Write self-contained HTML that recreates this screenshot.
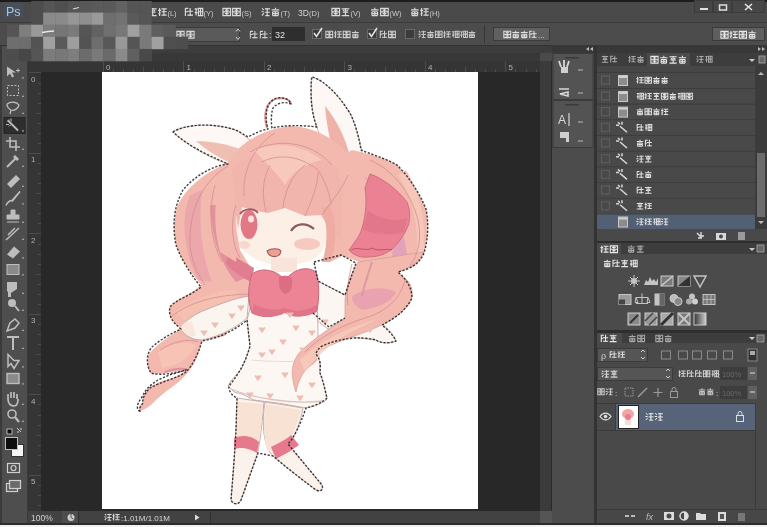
<!DOCTYPE html>
<html><head><meta charset="utf-8">
<style>
*{margin:0;padding:0;box-sizing:border-box}
html,body{width:767px;height:527px;overflow:hidden;background:#4a4a4a;font-family:"Liberation Sans",sans-serif}
.a{position:absolute}
svg text{font-family:"Liberation Sans",sans-serif}
</style></head><body>
<div class="a" style="left:0;top:0;width:767px;height:22px;background:#4a4a4a"></div>
<div class="a" style="left:0;top:22px;width:767px;height:24px;background:#4c4c4c"></div>
<div class="a" style="left:0;top:46px;width:28px;height:477px;background:#4e4e4e;border-left:2px solid #3a3a3a;border-right:1px solid #3a3a3a"></div>
<div class="a" style="left:28px;top:61px;width:512px;height:11px;background:#353535"></div>
<div class="a" style="left:28px;top:72px;width:13px;height:439px;background:#353535"></div>
<div class="a" style="left:41px;top:72px;width:499px;height:439px;background:#282828"></div>
<div class="a" style="left:102px;top:72px;width:376px;height:437px;background:#fff"></div>
<div class="a" style="left:28px;top:511px;width:523px;height:12px;background:#424242"></div>
<div class="a" style="left:540px;top:61px;width:12px;height:450px;background:#3b3b3b;border-right:1px solid #2a2a2a"></div>
<div class="a" style="left:540px;top:511px;width:12px;height:12px;background:#555"></div>
<div class="a" style="left:552px;top:45px;width:42px;height:478px;background:#4c4c4c"></div>
<div class="a" style="left:594px;top:45px;width:3px;height:478px;background:#333"></div>
<div class="a" style="left:597px;top:45px;width:170px;height:478px;background:#4a4a4a"></div>
<div class="a" style="left:0;top:523px;width:767px;height:2px;background:#2c2c2c"></div><div class="a" style="left:0;top:525px;width:767px;height:2px;background:#f2f2f2"></div>
<svg class="a" style="left:0;top:0" width="767" height="527" viewBox="0 0 767 527">
<defs>
<filter id="bl" x="-10%" y="-10%" width="120%" height="120%"><feGaussianBlur stdDeviation="0.7"/></filter>
<filter id="bl2" x="-10%" y="-10%" width="120%" height="120%"><feGaussianBlur stdDeviation="1.6"/></filter>
</defs>
<g filter="url(#bl)" stroke-linejoin="round">
<!-- left ear -->
<path d="M173,132 C185,124 215,122 238,131 L250,140 L228,164 C215,160 190,148 173,132 Z" fill="#fdf8f5" stroke="#c7aaa6" stroke-width="0.9"/>
<path d="M196,141 C215,141 235,146 246,152 L230,163 C218,157 206,150 196,141 Z" fill="#f0bfb4"/>
<!-- right ear -->
<path d="M312,77 C324,80 340,96 351,115 C356,126 360,140 362,152 L335,170 L323,142 C318,132 314,122 312,106 C311,95 311,85 312,77 Z" fill="#fdf8f5" stroke="#c7aaa6" stroke-width="0.9"/>
<path d="M325,106 C335,118 345,135 351,160 L338,168 C332,150 327,130 325,106 Z" fill="#efb2a8"/>
<!-- ahoge -->
<path d="M267,128 C263,114 266,101 277,98.5 C285,97.5 290,100 291,104" fill="none" stroke="#e49a9a" stroke-width="2.2"/>
<!-- right lobe -->
<path d="M352,150 C370,154 385,158 397,165 C409,177 419,192 426,209 C429,224 428,240 424,253 C420,262 416,266 410,268 L398,272 L360,262 L342,256 L330,245 L328,200 L335,160 Z" fill="#f3b9af"/>
<path d="M388,205 C402,225 410,250 406,268 L390,272 C394,255 394,236 384,215 Z" fill="#e3a2ba"/>
<path d="M406,170 C418,190 426,215 424,250 L416,262 C420,230 414,200 398,175 Z" fill="#f6c6b8"/>
<!-- ribbon -->
<path d="M370,174 C382,178 396,188 407,202 C411,212 410,220 408,226 C405,234 398,244 392,249 C386,254 378,257 368,257 C362,258 354,256 349,250 C354,243 360,236 362,228 C366,215 367,200 365,188 Z" fill="#eb8193" stroke="#c96c7c" stroke-width="0.9"/>
<path d="M368,210 C381,220 396,222 407,218 L404,232 C391,236 376,234 363,230 Z" fill="#dc6f86" opacity="0.6"/>
<path d="M351,250 C358,246 366,252 372,248 C378,252 386,248 392,250" fill="none" stroke="#c85068" stroke-width="1"/>
<!-- left lobe -->
<path d="M228,163 C205,172 186,188 178,205 C172,222 173,240 180,255 C186,268 196,277 201,285 C192,294 178,298 170,306 C167,314 172,322 180,328 L202,341 L225,336 L250,300 L252,270 L240,250 L232,200 Z" fill="#f3b9af"/>
<path d="M190,195 C180,220 184,252 198,280 L212,282 C202,255 198,225 202,190 Z" fill="#eca7aa"/>
<path d="M210,205 C212,240 220,262 236,282 L250,276 C234,258 226,236 222,205 Z" fill="#e3929d"/>
<path d="M228,252 C236,258 244,262 254,268 L252,282 C242,278 234,272 226,264 Z" fill="#e07e90"/>
<path d="M176,312 C190,300 210,292 235,290 L240,300 C220,302 200,310 186,322 Z" fill="#f6c2b2" opacity="0.8"/>
<!-- left tail -->
<path d="M182,328 C170,336 157,344 149,354 C146,362 147,370 151,373 C156,375 165,373 172,372 L186,370 C180,376 170,379 162,381 C154,384 148,388 146,392 C143,396 142,399 143,402 C140,405 137,408 140,411 C144,410 148,407 151,405 C156,400 163,393 175,385 C188,375 198,362 202,341 Z" fill="#f3b9af"/>
<path d="M158,352 C170,344 185,340 196,345 C190,358 178,366 162,368 Z" fill="#f7c5b6" opacity="0.8"/>
<path d="M165,372 C175,368 186,368 188,370" fill="none" stroke="#e0909a" stroke-width="2"/>
<!-- head hair -->
<path d="M228,163 C236,145 262,129 290,126 C316,127 340,140 356,165 C366,195 352,235 342,256 L330,262 L322,215 C300,202 262,202 240,215 L236,262 L220,252 C212,222 214,185 228,163 Z" fill="#f3b9af"/>
<!-- face -->
<path d="M236,205 L328,205 L328,233 C326,248 321,255 312,260 C303,264 295,265 280,265 C265,265 252,258 245,252 C239,246 236,235 236,222 Z" fill="#fcefe6"/>
<!-- bangs -->
<path d="M232,170 C255,145 305,140 337,168 C344,190 343,215 342,240 L330,230 L321,215 L305,216 L285,208 L268,213 L252,210 L242,207 L238,228 L236,215 Z" fill="#f2b5ad"/>
<path d="M254,150 C275,142 300,143 322,160 C310,163 295,168 285,185 C275,170 262,160 254,150 Z" fill="#f7c8bc"/>
<path d="M330,205 C337,225 337,245 330,262 L322,262 C328,245 328,225 322,208 Z" fill="#efaca2"/>
<!-- eye & face details -->
<ellipse cx="249" cy="224.5" rx="8.5" ry="14.5" fill="#e27886"/>
<path d="M240,214 C244,208 254,208 258,213" stroke="#a05a66" stroke-width="2" fill="none"/>
<ellipse cx="251" cy="219" rx="3" ry="3.5" fill="#fbe3e3"/>
<path d="M291,231 C296,223 306,222 314,229" stroke="#8a5a5e" stroke-width="2.3" fill="none"/>
<ellipse cx="307" cy="244" rx="13" ry="6" fill="#f5c0b6" opacity="0.8"/>
<ellipse cx="244" cy="245" rx="6" ry="4" fill="#f6c6bc" opacity="0.6"/>
<path d="M267,251 C271,248 279,248 281,251 C280,258 270,259 267,251 Z" fill="#eea092" stroke="#9a5a60" stroke-width="1.1"/>
<!-- neck -->
<path d="M271,258 L297,258 L297,272 L271,272 Z" fill="#f8e4da"/>
<!-- right arm (hand) -->
<path d="M318,281 L345,295 L380,322 C388,328 394,336 396,341 C388,344 380,343 376,340 L345,336 C330,332 320,324 316,318 Z" fill="#fbf6f2" stroke="#b89c9a" stroke-width="0.8"/>
<!-- left arm -->
<path d="M249,296 L247,318 C238,326 222,336 202,340 C192,340 185,336 180,328 C186,320 195,314 205,310 C220,304 235,298 249,296 Z" fill="#fbf5f0" stroke="#b89c9a" stroke-width="0.8"/>
<path d="M180,328 C183,322 188,320 192,322 L196,336 C190,338 184,334 180,328 Z" fill="#f9e6dc"/>
<!-- dress -->
<path d="M252,300 L316,300 C320,330 316,345 320,362 C320,368 320,373 320,373 C323,380 325,390 327,398 C326,402 323,402 323,402 C318,406 306,408 306,408 C295,406 278,403 278,403 C268,402 254,400 254,400 L242,394 L234,392 L228,386 L231,381 C236,375 242,368 242,368 C246,358 250,346 250,346 L247,320 Z" fill="#fcf7f2" stroke="#b89c9a" stroke-width="0.8"/>
<path d="M231,389 C250,397 290,405 323,401" stroke="#dcc4bd" stroke-width="1.3" fill="none"/>
<path d="M252,360 C270,362 300,362 320,360" stroke="#eadad4" stroke-width="1" fill="none"/>
<!-- right strand -->
<path d="M358,262 C350,275 346,288 345,300 L345,318 C330,328 312,340 300,352 C293,360 291,370 293,380 C294,386 295,390 296,392 C298,382 302,372 310,366 C316,362 318,360 316,354 C322,348 335,343 360,334 C380,327 397,318 408,306 C414,296 413,288 408,281 C404,277 400,275 398,272 C410,268 418,262 424,252 Z" fill="#f3b9af" stroke="#cf9c96" stroke-width="0.7"/>
<path d="M352,296 C362,290 378,284 396,292 C392,302 378,308 362,310 C355,306 352,302 352,296 Z" fill="#e69cb0" opacity="0.8"/>
<path d="M300,360 C315,345 340,330 380,318 C350,332 325,344 305,372 Z" fill="#f8ccbd" opacity="0.8"/>
<path d="M372,262 C368,275 364,285 362,296" fill="none" stroke="#dc9aa0" stroke-width="2"/>
<!-- bow -->
<path d="M252,274 C263,266 277,271 285,280 C293,270 306,265 316,272 C320,285 319,300 317,310 C305,318 292,317 285,311 C275,318 262,318 252,313 C247,300 248,286 252,274 Z" fill="#ec8496" stroke="#c46878" stroke-width="1"/>
<path d="M279,277 C284,275 290,275 292,279 C293,289 289,294 285,294 C280,292 278,285 279,277 Z" fill="#dc6d83"/>
<path d="M254,304 C265,310 275,311 285,308 C295,312 305,312 318,304 L317,312 C305,318 292,318 285,313 C275,318 262,318 252,313 Z" fill="#df7489"/>
<!-- legs -->
<path d="M237,398 L264,402 C262,420 261,440 257,455 L241,500 C239,505 233,505 231,500 C233,475 235,450 236,430 Z" fill="#fbf2ec" stroke="#b89c9a" stroke-width="0.8"/>
<path d="M265,402 L303,408 C300,425 294,438 288,444 L322,485 C324,490 320,492 316,490 C300,478 287,468 273,456 C262,445 262,420 265,402 Z" fill="#fbf2ec" stroke="#b89c9a" stroke-width="0.8"/>
<path d="M238,402 L263,404 C262,420 261,432 259,442 L236,442 Z" fill="#f8e2d3"/>
<path d="M266,404 L301,410 C298,422 294,432 290,440 L268,452 C263,440 263,420 266,404 Z" fill="#f8e2d3"/>
<path d="M234,438 C243,434 253,436 259,442 L257,453 C249,448 241,447 234,449 Z" fill="#e47a8c"/>
<path d="M271,447 C279,443 287,439 291,435 L299,445 C292,450 284,455 276,459 Z" fill="#e47a8c"/>
<!-- hearts -->
<g><path d="M259,327.5 L262,332 L265,327.5 M260.8,327.5L262,329.5L263.2,327.5" stroke="#edbdb4" stroke-width="1.4" fill="none"/><path d="M293,325.5 L296,330 L299,325.5 M294.8,325.5L296,327.5L297.2,325.5" stroke="#edbdb4" stroke-width="1.4" fill="none"/><path d="M269,349.5 L272,354 L275,349.5 M270.8,349.5L272,351.5L273.2,349.5" stroke="#edbdb4" stroke-width="1.4" fill="none"/><path d="M300,347.5 L303,352 L306,347.5 M301.8,347.5L303,349.5L304.2,347.5" stroke="#edbdb4" stroke-width="1.4" fill="none"/><path d="M255,375.5 L258,380 L261,375.5 M256.8,375.5L258,377.5L259.2,375.5" stroke="#edbdb4" stroke-width="1.4" fill="none"/><path d="M282,372.5 L285,377 L288,372.5 M283.8,372.5L285,374.5L286.2,372.5" stroke="#edbdb4" stroke-width="1.4" fill="none"/><path d="M309,382.5 L312,387 L315,382.5 M310.8,382.5L312,384.5L313.2,382.5" stroke="#edbdb4" stroke-width="1.4" fill="none"/><path d="M267,393.5 L270,398 L273,393.5 M268.8,393.5L270,395.5L271.2,393.5" stroke="#edbdb4" stroke-width="1.4" fill="none"/><path d="M297,395.5 L300,400 L303,395.5 M298.8,395.5L300,397.5L301.2,395.5" stroke="#edbdb4" stroke-width="1.4" fill="none"/><path d="M259,352.5 L262,357 L265,352.5 M260.8,352.5L262,354.5L263.2,352.5" stroke="#edbdb4" stroke-width="1.4" fill="none"/><path d="M287,312.5 L290,317 L293,312.5 M288.8,312.5L290,314.5L291.2,312.5" stroke="#edbdb4" stroke-width="1.4" fill="none"/><path d="M309,330.5 L312,335 L315,330.5 M310.8,330.5L312,332.5L313.2,330.5" stroke="#edbdb4" stroke-width="1.4" fill="none"/><path d="M247,392.5 L250,397 L253,392.5 M248.8,392.5L250,394.5L251.2,392.5" stroke="#edbdb4" stroke-width="1.4" fill="none"/><path d="M280,339.5 L283,344 L286,339.5 M281.8,339.5L283,341.5L284.2,339.5" stroke="#edbdb4" stroke-width="1.4" fill="none"/><path d="M212,322.5 L215,327 L218,322.5 M213.8,322.5L215,324.5L216.2,322.5" stroke="#edbdb4" stroke-width="1.4" fill="none"/><path d="M229,313.5 L232,318 L235,313.5 M230.8,313.5L232,315.5L233.2,313.5" stroke="#edbdb4" stroke-width="1.4" fill="none"/><path d="M201,330.5 L204,335 L207,330.5 M202.8,330.5L204,332.5L205.2,330.5" stroke="#edbdb4" stroke-width="1.4" fill="none"/><path d="M238,305.5 L241,310 L244,305.5 M239.8,305.5L241,307.5L242.2,305.5" stroke="#edbdb4" stroke-width="1.4" fill="none"/><path d="M322,319.5 L325,324 L328,319.5 M323.8,319.5L325,321.5L326.2,319.5" stroke="#edbdb4" stroke-width="1.4" fill="none"/><path d="M367,327.5 L370,332 L373,327.5 M368.8,327.5L370,329.5L371.2,327.5" stroke="#edbdb4" stroke-width="1.4" fill="none"/></g>
<!-- hair strand lines -->
<g fill="none" stroke="#cf8c90" stroke-width="1" opacity="0.75">
<path d="M244,196 C242,170 255,145 275,133"/>
<path d="M250,152 C275,138 310,140 332,165"/>
<path d="M262,162 C280,153 300,156 318,170 C325,180 330,195 331,205"/>
<path d="M283,208 C285,190 292,175 305,165"/>
<path d="M266,212 C262,195 262,180 270,165"/>
<path d="M305,216 C312,200 318,185 318,172"/>
<path d="M322,215 C332,200 342,190 348,175"/>
<path d="M370,160 C392,170 410,190 418,220 C422,240 418,255 410,265"/>
<path d="M365,178 C380,186 395,200 404,215"/>
<path d="M228,166 C205,180 190,205 190,240 C190,260 198,275 205,285"/>
<path d="M215,185 C208,210 210,240 222,262"/>
<path d="M236,205 C230,222 232,245 240,258"/>
<path d="M172,316 C190,302 215,295 248,294"/>
<path d="M160,350 C172,342 188,338 198,342"/>
<path d="M352,264 C348,280 346,295 348,305"/>
<path d="M405,280 C400,300 385,312 365,318 C340,326 318,338 305,352"/>
</g>
<!-- selection outline -->
<g fill="none" stroke="#1c1c1c" stroke-width="1.4" stroke-dasharray="2.2 1.6" opacity="0.85">
<path d="M173,132 C185,124 215,122 238,131 L248,137 C255,133 262,130 268,129 C264,116 266,101 277,98 C285,97 290,100 291,104 C284,101 277,103 273,108 C271,114 271,122 272,128 C285,125 300,125 317,127 C313,118 311,105 311,92 C311,85 311,80 312,77 C324,80 340,96 351,115 C356,126 359,138 361,150 C370,154 385,158 397,165 C409,177 419,192 426,209 C429,224 428,240 424,253 C420,262 414,268 398,272 C404,277 412,286 412,298 C405,312 392,320 382,325 C388,330 394,336 396,341 C388,344 380,343 376,340 C360,336 340,338 322,346 C318,349 316,352 316,354 C322,362 320,368 320,373 C323,380 325,390 327,398 C322,404 306,408 306,408 C300,425 294,438 288,444 L322,485 C324,490 320,492 316,490 C300,478 287,468 273,456 L258,453 L241,500 C239,505 233,505 231,500 C233,475 235,450 236,430 L237,398 C232,396 228,390 229,386 C238,375 246,362 250,346 L247,320 C235,330 220,338 202,341 C198,355 192,366 186,372 C178,378 160,382 150,388 C144,394 142,400 143,403 C140,407 138,410 141,412 C136,410 136,405 142,397 C146,388 152,384 158,380 C170,374 180,372 186,370 C175,373 160,376 151,373 C146,365 146,354 152,347 C160,340 170,334 181,329 C172,322 168,315 170,307 C175,300 190,296 201,287 C195,280 182,262 176,245 C172,225 174,206 183,190 C193,178 210,166 228,164 C215,158 190,148 173,132 Z"/>
<path d="M314,262 L341,255 L356,263 L345,295 L318,281 Z"/>
<path d="M313,313 L329,327 L345,318"/>
</g>
</svg>

<svg class="a" style="left:0;top:0" width="767" height="527" viewBox="0 0 767 527">
<defs><filter id="sb" x="0" y="0" width="100%" height="100%"><feGaussianBlur stdDeviation="0.45"/></filter></defs><g filter="url(#sb)"><rect x="0" y="0" width="767" height="2" fill="#1c1a1a" />
<rect x="4" y="3" width="19" height="15" fill="#46505a" rx="2"/>
<text x="6" y="15.5" font-size="12.5" fill="#a4c6e6" font-weight="normal" text-anchor="start" >Ps</text>
<path transform="translate(148.0,7) scale(0.950)" d="M1,2H9 M5,1V9.5 M2,5.5H8 M1,9H9 M2.5,3.5L4,4.5 M7.5,3.5L6,4.5" fill="none" stroke="#dadada" stroke-width="1.25"/><path transform="translate(157.7,7) scale(0.950)" d="M2,1V9.5 M0.5,3.5H3.5 M4,2H9.5 M4,5H9.5 M4,8.5H9.5 M6.5,2V8.5 M0.8,7.5L3,6" fill="none" stroke="#dadada" stroke-width="1.25"/>
<text x="167.4" y="16" font-size="7.5" fill="#cccccc" font-weight="normal" text-anchor="start" >(L)</text>
<path transform="translate(184.0,7) scale(0.950)" d="M1.5,1V9.5 M1.5,1.5H4.5 M3.5,4.5H9.5 M6.5,1V9.5 M3.5,8.5H9.5 M1.5,5H4" fill="none" stroke="#dadada" stroke-width="1.25"/><path transform="translate(193.7,7) scale(0.950)" d="M1,2H4 M2.5,2V9 M1,6H4 M5,1.5H9.5V9H5Z M5,5H9.5 M7.2,1.5V9" fill="none" stroke="#dadada" stroke-width="1.25"/>
<text x="203.4" y="16" font-size="7.5" fill="#cccccc" font-weight="normal" text-anchor="start" >(Y)</text>
<path transform="translate(222.0,7) scale(0.950)" d="M1,1.5H9V9H1Z M1,5.2H9 M5,1.5V9 M3,3.3H7 M3,7H7" fill="none" stroke="#dadada" stroke-width="1.25"/><path transform="translate(231.7,7) scale(0.950)" d="M1,1.5H9V9H1Z M1,5.2H9 M5,1.5V9 M3,3.3H7 M3,7H7" fill="none" stroke="#dadada" stroke-width="1.25"/>
<text x="241.4" y="16" font-size="7.5" fill="#cccccc" font-weight="normal" text-anchor="start" >(S)</text>
<path transform="translate(261.0,7) scale(0.950)" d="M1,1.5L3,3 M0.5,5H3 M1,9L3,6.5 M4,2H9.5 M6.5,1V9.5 M4,5.5H9.5 M4.5,9H9" fill="none" stroke="#dadada" stroke-width="1.25"/><path transform="translate(270.7,7) scale(0.950)" d="M5,0.8V3 M1,3H9 M2,5H8 M2,5V9 M8,5V9 M2,9H8 M5,5V9 M2,7H8" fill="none" stroke="#dadada" stroke-width="1.25"/>
<text x="280.4" y="16" font-size="7.5" fill="#cccccc" font-weight="normal" text-anchor="start" >(T)</text>
<text x="298" y="16" font-size="8.5" fill="#d4d4d4" font-weight="normal" text-anchor="start" >3D</text>
<text x="309" y="16" font-size="7.5" fill="#cccccc" font-weight="normal" text-anchor="start" >(D)</text>
<path transform="translate(331.0,7) scale(0.950)" d="M1,1.5H9V9H1Z M1,5.2H9 M5,1.5V9 M3,3.3H7 M3,7H7" fill="none" stroke="#dadada" stroke-width="1.25"/><path transform="translate(340.7,7) scale(0.950)" d="M1,2H9 M5,1V9.5 M2,5.5H8 M1,9H9 M2.5,3.5L4,4.5 M7.5,3.5L6,4.5" fill="none" stroke="#dadada" stroke-width="1.25"/>
<text x="350.4" y="16" font-size="7.5" fill="#cccccc" font-weight="normal" text-anchor="start" >(V)</text>
<path transform="translate(370.0,7) scale(0.950)" d="M5,0.8V3 M1,3H9 M2,5H8 M2,5V9 M8,5V9 M2,9H8 M5,5V9 M2,7H8" fill="none" stroke="#dadada" stroke-width="1.25"/><path transform="translate(379.7,7) scale(0.950)" d="M1,1.5H9V9H1Z M1,5.2H9 M5,1.5V9 M3,3.3H7 M3,7H7" fill="none" stroke="#dadada" stroke-width="1.25"/>
<text x="389.4" y="16" font-size="7.5" fill="#cccccc" font-weight="normal" text-anchor="start" >(W)</text>
<path transform="translate(410.0,7) scale(0.950)" d="M5,0.8V3 M1,3H9 M2,5H8 M2,5V9 M8,5V9 M2,9H8 M5,5V9 M2,7H8" fill="none" stroke="#dadada" stroke-width="1.25"/><path transform="translate(419.7,7) scale(0.950)" d="M2,1V9.5 M0.5,3.5H3.5 M4,2H9.5 M4,5H9.5 M4,8.5H9.5 M6.5,2V8.5 M0.8,7.5L3,6" fill="none" stroke="#dadada" stroke-width="1.25"/>
<text x="429.4" y="16" font-size="7.5" fill="#cccccc" font-weight="normal" text-anchor="start" >(H)</text>
<rect x="694" y="0" width="71" height="13" fill="#474747" />
<rect x="694.5" y="0.5" width="18" height="12" fill="none" stroke="#3a3a3a" stroke-width="1"/>
<rect x="713.5" y="0.5" width="18" height="12" fill="none" stroke="#3a3a3a" stroke-width="1"/>
<rect x="732.5" y="0.5" width="32" height="12" fill="none" stroke="#3a3a3a" stroke-width="1"/>
<rect x="700" y="8" width="8" height="2" fill="#dedede" />
<rect x="719.5" y="5" width="7" height="5" fill="none" stroke="#dedede" stroke-width="1.5"/>
<path d="M745,4L752,10M752,4L745,10" fill="none" stroke="#e4e4e4" stroke-width="1.6" />
<line x1="0" y1="22.5" x2="767" y2="22.5" stroke="#3a3a3a" stroke-width="1" />
<rect x="146.5" y="27.5" width="93" height="14" fill="#5a5a5a" stroke="#3a3a3a" stroke-width="1"/>
<path transform="translate(176.0,30) scale(0.900)" d="M1,1.5H9V9H1Z M1,5.2H9 M5,1.5V9 M3,3.3H7 M3,7H7" fill="none" stroke="#d8d8d8" stroke-width="1.17"/><path transform="translate(186.0,30) scale(0.900)" d="M1,1.5H9V9H1Z M1,5.2H9 M5,1.5V9 M3,3.3H7 M3,7H7" fill="none" stroke="#d8d8d8" stroke-width="1.17"/>
<path d="M236,31.5l2,-2.5l2,2.5M236,37l2,2.5l2,-2.5" fill="none" stroke="#cfcfcf" stroke-width="1" />
<path transform="translate(249.0,30) scale(0.900)" d="M1.5,1V9.5 M1.5,1.5H4.5 M3.5,4.5H9.5 M6.5,1V9.5 M3.5,8.5H9.5 M1.5,5H4" fill="none" stroke="#cfcfcf" stroke-width="1.17"/><path transform="translate(259.0,30) scale(0.900)" d="M1.5,1V9.5 M1.5,1.5H4.5 M3.5,4.5H9.5 M6.5,1V9.5 M3.5,8.5H9.5 M1.5,5H4" fill="none" stroke="#cfcfcf" stroke-width="1.17"/>
<text x="269" y="38" font-size="9" fill="#cfcfcf" font-weight="normal" text-anchor="start" >:</text>
<rect x="272" y="27" width="33" height="14" fill="#2f2f2f" />
<text x="275" y="38" font-size="9" fill="#e0e0e0" font-weight="normal" text-anchor="start" >32</text>
<rect x="312.5" y="29.5" width="9" height="9" fill="#3a3a3a" stroke="#6a6a6a" stroke-width="1"/>
<path d="M314,33L316.5,36.5L322,28" fill="none" stroke="#e8e8e8" stroke-width="1.5" />
<path transform="translate(325.0,30) scale(0.850)" d="M1,1.5H9V9H1Z M1,5.2H9 M5,1.5V9 M3,3.3H7 M3,7H7" fill="none" stroke="#d0d0d0" stroke-width="1.24"/><path transform="translate(333.7,30) scale(0.850)" d="M2,1V9.5 M0.5,3.5H3.5 M4,2H9.5 M4,5H9.5 M4,8.5H9.5 M6.5,2V8.5 M0.8,7.5L3,6" fill="none" stroke="#d0d0d0" stroke-width="1.24"/><path transform="translate(342.4,30) scale(0.850)" d="M1,1.5H9V9H1Z M1,5.2H9 M5,1.5V9 M3,3.3H7 M3,7H7" fill="none" stroke="#d0d0d0" stroke-width="1.24"/><path transform="translate(351.1,30) scale(0.850)" d="M5,0.8V3 M1,3H9 M2,5H8 M2,5V9 M8,5V9 M2,9H8 M5,5V9 M2,7H8" fill="none" stroke="#d0d0d0" stroke-width="1.24"/>
<rect x="367.5" y="29.5" width="9" height="9" fill="#3a3a3a" stroke="#6a6a6a" stroke-width="1"/>
<path d="M369,33L371.5,36.5L377,28" fill="none" stroke="#e8e8e8" stroke-width="1.5" />
<path transform="translate(379.0,30) scale(0.850)" d="M1.5,1V9.5 M1.5,1.5H4.5 M3.5,4.5H9.5 M6.5,1V9.5 M3.5,8.5H9.5 M1.5,5H4" fill="none" stroke="#d0d0d0" stroke-width="1.24"/><path transform="translate(387.7,30) scale(0.850)" d="M1,1.5H9V9H1Z M1,5.2H9 M5,1.5V9 M3,3.3H7 M3,7H7" fill="none" stroke="#d0d0d0" stroke-width="1.24"/>
<rect x="405.5" y="29.5" width="9" height="9" fill="#3a3a3a" stroke="#6a6a6a" stroke-width="1"/>
<path transform="translate(418.0,30) scale(0.830)" d="M1,1.5L3,3 M0.5,5H3 M1,9L3,6.5 M4,2H9.5 M6.5,1V9.5 M4,5.5H9.5 M4.5,9H9" fill="none" stroke="#c8c8c8" stroke-width="1.27"/><path transform="translate(426.3,30) scale(0.830)" d="M5,0.8V3 M1,3H9 M2,5H8 M2,5V9 M8,5V9 M2,9H8 M5,5V9 M2,7H8" fill="none" stroke="#c8c8c8" stroke-width="1.27"/><path transform="translate(434.6,30) scale(0.830)" d="M1,1.5H9V9H1Z M1,5.2H9 M5,1.5V9 M3,3.3H7 M3,7H7" fill="none" stroke="#c8c8c8" stroke-width="1.27"/><path transform="translate(442.9,30) scale(0.830)" d="M2,1V9.5 M0.5,3.5H3.5 M4,2H9.5 M4,5H9.5 M4,8.5H9.5 M6.5,2V8.5 M0.8,7.5L3,6" fill="none" stroke="#c8c8c8" stroke-width="1.27"/><path transform="translate(451.2,30) scale(0.830)" d="M1,2H4 M2.5,2V9 M1,6H4 M5,1.5H9.5V9H5Z M5,5H9.5 M7.2,1.5V9" fill="none" stroke="#c8c8c8" stroke-width="1.27"/><path transform="translate(459.5,30) scale(0.830)" d="M1,2H4 M2.5,2V9 M1,6H4 M5,1.5H9.5V9H5Z M5,5H9.5 M7.2,1.5V9" fill="none" stroke="#c8c8c8" stroke-width="1.27"/><path transform="translate(467.8,30) scale(0.830)" d="M5,0.8V3 M1,3H9 M2,5H8 M2,5V9 M8,5V9 M2,9H8 M5,5V9 M2,7H8" fill="none" stroke="#c8c8c8" stroke-width="1.27"/>
<line x1="484.5" y1="25" x2="484.5" y2="43" stroke="#353535" stroke-width="1" />
<rect x="493.5" y="27.5" width="56" height="13" fill="#606060" stroke="#3a3a3a" stroke-width="1"/>
<path transform="translate(503.0,30) scale(0.850)" d="M1,1.5H9V9H1Z M1,5.2H9 M5,1.5V9 M3,3.3H7 M3,7H7" fill="none" stroke="#e0e0e0" stroke-width="1.24"/><path transform="translate(511.5,30) scale(0.850)" d="M5,0.8V3 M1,3H9 M2,5H8 M2,5V9 M8,5V9 M2,9H8 M5,5V9 M2,7H8" fill="none" stroke="#e0e0e0" stroke-width="1.24"/><path transform="translate(520.0,30) scale(0.850)" d="M5,0.8V3 M1,3H9 M2,5H8 M2,5V9 M8,5V9 M2,9H8 M5,5V9 M2,7H8" fill="none" stroke="#e0e0e0" stroke-width="1.24"/><path transform="translate(528.5,30) scale(0.850)" d="M1.5,1V9.5 M1.5,1.5H4.5 M3.5,4.5H9.5 M6.5,1V9.5 M3.5,8.5H9.5 M1.5,5H4" fill="none" stroke="#e0e0e0" stroke-width="1.24"/>
<text x="538" y="38" font-size="8" fill="#e0e0e0" font-weight="normal" text-anchor="start" >...</text>
<rect x="712.5" y="27.5" width="52" height="13" fill="#5e5e5e" stroke="#3a3a3a" stroke-width="1"/>
<path transform="translate(720.0,30) scale(0.900)" d="M1,1.5H9V9H1Z M1,5.2H9 M5,1.5V9 M3,3.3H7 M3,7H7" fill="none" stroke="#e8e8e8" stroke-width="1.17"/><path transform="translate(729.2,30) scale(0.900)" d="M2,1V9.5 M0.5,3.5H3.5 M4,2H9.5 M4,5H9.5 M4,8.5H9.5 M6.5,2V8.5 M0.8,7.5L3,6" fill="none" stroke="#e8e8e8" stroke-width="1.17"/><path transform="translate(738.4,30) scale(0.900)" d="M1,1.5H9V9H1Z M1,5.2H9 M5,1.5V9 M3,3.3H7 M3,7H7" fill="none" stroke="#e8e8e8" stroke-width="1.17"/><path transform="translate(747.6,30) scale(0.900)" d="M5,0.8V3 M1,3H9 M2,5H8 M2,5V9 M8,5V9 M2,9H8 M5,5V9 M2,7H8" fill="none" stroke="#e8e8e8" stroke-width="1.17"/>
<line x1="0" y1="45.5" x2="767" y2="45.5" stroke="#333" stroke-width="1" />
<rect x="28" y="46" width="524" height="7" fill="#3e3e3e" />
<rect x="28" y="53" width="512" height="8" fill="#383838" />
<line x1="103.5" y1="61" x2="103.5" y2="72" stroke="#4e4e4e" stroke-width="1" />
<line x1="113.5" y1="69" x2="113.5" y2="72" stroke="#4e4e4e" stroke-width="1" />
<line x1="123.5" y1="69" x2="123.5" y2="72" stroke="#4e4e4e" stroke-width="1" />
<line x1="133.5" y1="69" x2="133.5" y2="72" stroke="#4e4e4e" stroke-width="1" />
<line x1="143.5" y1="67" x2="143.5" y2="72" stroke="#4e4e4e" stroke-width="1" />
<line x1="153.5" y1="69" x2="153.5" y2="72" stroke="#4e4e4e" stroke-width="1" />
<line x1="163.5" y1="69" x2="163.5" y2="72" stroke="#4e4e4e" stroke-width="1" />
<line x1="173.5" y1="69" x2="173.5" y2="72" stroke="#4e4e4e" stroke-width="1" />
<line x1="183.5" y1="61" x2="183.5" y2="72" stroke="#4e4e4e" stroke-width="1" />
<line x1="194.5" y1="69" x2="194.5" y2="72" stroke="#4e4e4e" stroke-width="1" />
<line x1="204.5" y1="69" x2="204.5" y2="72" stroke="#4e4e4e" stroke-width="1" />
<line x1="214.5" y1="69" x2="214.5" y2="72" stroke="#4e4e4e" stroke-width="1" />
<line x1="224.5" y1="67" x2="224.5" y2="72" stroke="#4e4e4e" stroke-width="1" />
<line x1="234.5" y1="69" x2="234.5" y2="72" stroke="#4e4e4e" stroke-width="1" />
<line x1="244.5" y1="69" x2="244.5" y2="72" stroke="#4e4e4e" stroke-width="1" />
<line x1="254.5" y1="69" x2="254.5" y2="72" stroke="#4e4e4e" stroke-width="1" />
<line x1="264.5" y1="61" x2="264.5" y2="72" stroke="#4e4e4e" stroke-width="1" />
<line x1="274.5" y1="69" x2="274.5" y2="72" stroke="#4e4e4e" stroke-width="1" />
<line x1="284.5" y1="69" x2="284.5" y2="72" stroke="#4e4e4e" stroke-width="1" />
<line x1="294.5" y1="69" x2="294.5" y2="72" stroke="#4e4e4e" stroke-width="1" />
<line x1="304.5" y1="67" x2="304.5" y2="72" stroke="#4e4e4e" stroke-width="1" />
<line x1="314.5" y1="69" x2="314.5" y2="72" stroke="#4e4e4e" stroke-width="1" />
<line x1="324.5" y1="69" x2="324.5" y2="72" stroke="#4e4e4e" stroke-width="1" />
<line x1="334.5" y1="69" x2="334.5" y2="72" stroke="#4e4e4e" stroke-width="1" />
<line x1="344.5" y1="61" x2="344.5" y2="72" stroke="#4e4e4e" stroke-width="1" />
<line x1="354.5" y1="69" x2="354.5" y2="72" stroke="#4e4e4e" stroke-width="1" />
<line x1="365.5" y1="69" x2="365.5" y2="72" stroke="#4e4e4e" stroke-width="1" />
<line x1="375.5" y1="69" x2="375.5" y2="72" stroke="#4e4e4e" stroke-width="1" />
<line x1="385.5" y1="67" x2="385.5" y2="72" stroke="#4e4e4e" stroke-width="1" />
<line x1="395.5" y1="69" x2="395.5" y2="72" stroke="#4e4e4e" stroke-width="1" />
<line x1="405.5" y1="69" x2="405.5" y2="72" stroke="#4e4e4e" stroke-width="1" />
<line x1="415.5" y1="69" x2="415.5" y2="72" stroke="#4e4e4e" stroke-width="1" />
<line x1="425.5" y1="61" x2="425.5" y2="72" stroke="#4e4e4e" stroke-width="1" />
<line x1="435.5" y1="69" x2="435.5" y2="72" stroke="#4e4e4e" stroke-width="1" />
<line x1="445.5" y1="69" x2="445.5" y2="72" stroke="#4e4e4e" stroke-width="1" />
<line x1="455.5" y1="69" x2="455.5" y2="72" stroke="#4e4e4e" stroke-width="1" />
<line x1="465.5" y1="67" x2="465.5" y2="72" stroke="#4e4e4e" stroke-width="1" />
<line x1="475.5" y1="69" x2="475.5" y2="72" stroke="#4e4e4e" stroke-width="1" />
<line x1="485.5" y1="69" x2="485.5" y2="72" stroke="#4e4e4e" stroke-width="1" />
<line x1="495.5" y1="69" x2="495.5" y2="72" stroke="#4e4e4e" stroke-width="1" />
<line x1="505.5" y1="61" x2="505.5" y2="72" stroke="#4e4e4e" stroke-width="1" />
<line x1="515.5" y1="69" x2="515.5" y2="72" stroke="#4e4e4e" stroke-width="1" />
<line x1="526.5" y1="69" x2="526.5" y2="72" stroke="#4e4e4e" stroke-width="1" />
<line x1="536.5" y1="69" x2="536.5" y2="72" stroke="#4e4e4e" stroke-width="1" />
<text x="106.0" y="69.5" font-size="8" fill="#b0b0b0" font-weight="normal" text-anchor="start" >0</text>
<text x="186.5" y="69.5" font-size="8" fill="#b0b0b0" font-weight="normal" text-anchor="start" >1</text>
<text x="267.0" y="69.5" font-size="8" fill="#b0b0b0" font-weight="normal" text-anchor="start" >2</text>
<text x="347.5" y="69.5" font-size="8" fill="#b0b0b0" font-weight="normal" text-anchor="start" >3</text>
<text x="428.0" y="69.5" font-size="8" fill="#b0b0b0" font-weight="normal" text-anchor="start" >4</text>
<text x="508.5" y="69.5" font-size="8" fill="#b0b0b0" font-weight="normal" text-anchor="start" >5</text>
<line x1="29" y1="72.5" x2="41" y2="72.5" stroke="#4e4e4e" stroke-width="1" />
<line x1="38" y1="83.5" x2="41" y2="83.5" stroke="#4e4e4e" stroke-width="1" />
<line x1="38" y1="93.5" x2="41" y2="93.5" stroke="#4e4e4e" stroke-width="1" />
<line x1="38" y1="103.5" x2="41" y2="103.5" stroke="#4e4e4e" stroke-width="1" />
<line x1="36" y1="113.5" x2="41" y2="113.5" stroke="#4e4e4e" stroke-width="1" />
<line x1="38" y1="123.5" x2="41" y2="123.5" stroke="#4e4e4e" stroke-width="1" />
<line x1="38" y1="133.5" x2="41" y2="133.5" stroke="#4e4e4e" stroke-width="1" />
<line x1="38" y1="143.5" x2="41" y2="143.5" stroke="#4e4e4e" stroke-width="1" />
<line x1="29" y1="153.5" x2="41" y2="153.5" stroke="#4e4e4e" stroke-width="1" />
<line x1="38" y1="163.5" x2="41" y2="163.5" stroke="#4e4e4e" stroke-width="1" />
<line x1="38" y1="173.5" x2="41" y2="173.5" stroke="#4e4e4e" stroke-width="1" />
<line x1="38" y1="183.5" x2="41" y2="183.5" stroke="#4e4e4e" stroke-width="1" />
<line x1="36" y1="193.5" x2="41" y2="193.5" stroke="#4e4e4e" stroke-width="1" />
<line x1="38" y1="203.5" x2="41" y2="203.5" stroke="#4e4e4e" stroke-width="1" />
<line x1="38" y1="213.5" x2="41" y2="213.5" stroke="#4e4e4e" stroke-width="1" />
<line x1="38" y1="223.5" x2="41" y2="223.5" stroke="#4e4e4e" stroke-width="1" />
<line x1="29" y1="233.5" x2="41" y2="233.5" stroke="#4e4e4e" stroke-width="1" />
<line x1="38" y1="244.5" x2="41" y2="244.5" stroke="#4e4e4e" stroke-width="1" />
<line x1="38" y1="254.5" x2="41" y2="254.5" stroke="#4e4e4e" stroke-width="1" />
<line x1="38" y1="264.5" x2="41" y2="264.5" stroke="#4e4e4e" stroke-width="1" />
<line x1="36" y1="274.5" x2="41" y2="274.5" stroke="#4e4e4e" stroke-width="1" />
<line x1="38" y1="284.5" x2="41" y2="284.5" stroke="#4e4e4e" stroke-width="1" />
<line x1="38" y1="294.5" x2="41" y2="294.5" stroke="#4e4e4e" stroke-width="1" />
<line x1="38" y1="304.5" x2="41" y2="304.5" stroke="#4e4e4e" stroke-width="1" />
<line x1="29" y1="314.5" x2="41" y2="314.5" stroke="#4e4e4e" stroke-width="1" />
<line x1="38" y1="324.5" x2="41" y2="324.5" stroke="#4e4e4e" stroke-width="1" />
<line x1="38" y1="334.5" x2="41" y2="334.5" stroke="#4e4e4e" stroke-width="1" />
<line x1="38" y1="344.5" x2="41" y2="344.5" stroke="#4e4e4e" stroke-width="1" />
<line x1="36" y1="354.5" x2="41" y2="354.5" stroke="#4e4e4e" stroke-width="1" />
<line x1="38" y1="364.5" x2="41" y2="364.5" stroke="#4e4e4e" stroke-width="1" />
<line x1="38" y1="374.5" x2="41" y2="374.5" stroke="#4e4e4e" stroke-width="1" />
<line x1="38" y1="384.5" x2="41" y2="384.5" stroke="#4e4e4e" stroke-width="1" />
<line x1="29" y1="394.5" x2="41" y2="394.5" stroke="#4e4e4e" stroke-width="1" />
<line x1="38" y1="404.5" x2="41" y2="404.5" stroke="#4e4e4e" stroke-width="1" />
<line x1="38" y1="415.5" x2="41" y2="415.5" stroke="#4e4e4e" stroke-width="1" />
<line x1="38" y1="425.5" x2="41" y2="425.5" stroke="#4e4e4e" stroke-width="1" />
<line x1="36" y1="435.5" x2="41" y2="435.5" stroke="#4e4e4e" stroke-width="1" />
<line x1="38" y1="445.5" x2="41" y2="445.5" stroke="#4e4e4e" stroke-width="1" />
<line x1="38" y1="455.5" x2="41" y2="455.5" stroke="#4e4e4e" stroke-width="1" />
<line x1="38" y1="465.5" x2="41" y2="465.5" stroke="#4e4e4e" stroke-width="1" />
<line x1="29" y1="475.5" x2="41" y2="475.5" stroke="#4e4e4e" stroke-width="1" />
<line x1="38" y1="485.5" x2="41" y2="485.5" stroke="#4e4e4e" stroke-width="1" />
<line x1="38" y1="495.5" x2="41" y2="495.5" stroke="#4e4e4e" stroke-width="1" />
<line x1="38" y1="505.5" x2="41" y2="505.5" stroke="#4e4e4e" stroke-width="1" />
<text x="31" y="81.5" font-size="8" fill="#b0b0b0" font-weight="normal" text-anchor="start" >0</text>
<text x="31" y="162.0" font-size="8" fill="#b0b0b0" font-weight="normal" text-anchor="start" >1</text>
<text x="31" y="242.5" font-size="8" fill="#b0b0b0" font-weight="normal" text-anchor="start" >2</text>
<text x="31" y="323.0" font-size="8" fill="#b0b0b0" font-weight="normal" text-anchor="start" >3</text>
<text x="31" y="403.5" font-size="8" fill="#b0b0b0" font-weight="normal" text-anchor="start" >4</text>
<text x="31" y="484.0" font-size="8" fill="#b0b0b0" font-weight="normal" text-anchor="start" >5</text>
<text x="31" y="521" font-size="8.5" fill="#d0d0d0" font-weight="normal" text-anchor="start" >100%</text>
<rect x="62" y="511" width="16" height="12" fill="#4e4e4e" />
<circle cx="71" cy="517.5" r="3.5" fill="#cfcfcf"/><path d="M71,517.5V514M71,517.5L73.5,519" stroke="#555" stroke-width="1"/>
<line x1="78.5" y1="512" x2="78.5" y2="523" stroke="#2e2e2e" stroke-width="1" />
<path transform="translate(104.0,513) scale(0.800)" d="M1,1.5L3,3 M0.5,5H3 M1,9L3,6.5 M4,2H9.5 M6.5,1V9.5 M4,5.5H9.5 M4.5,9H9" fill="none" stroke="#d8d8d8" stroke-width="1.31"/><path transform="translate(112.0,513) scale(0.800)" d="M2,1V9.5 M0.5,3.5H3.5 M4,2H9.5 M4,5H9.5 M4,8.5H9.5 M6.5,2V8.5 M0.8,7.5L3,6" fill="none" stroke="#d8d8d8" stroke-width="1.31"/>
<text x="121" y="521" font-size="8" fill="#d8d8d8" font-weight="normal" text-anchor="start" >:1.01M/1.01M</text>
<path d="M195,514.5L199.5,517.5L195,520.5Z" fill="#dcdcdc" stroke="none" stroke-width="1" />
<line x1="210.5" y1="512" x2="210.5" y2="523" stroke="#2e2e2e" stroke-width="1" />
<rect x="2" y="46" width="25" height="478" fill="none" />
<g transform="translate(13,72.5)"><path d="M-6,-6L-6,4L-3,1L-1,5L1,4L-1,0L3,0Z" fill="#bdbdbd"/><path d="M3,-2h4M5,-4v4" stroke="#bdbdbd"/></g>
<path d="M22,78.5l2,0l-1,-2z" fill="#bbb" stroke="none" stroke-width="1" />
<g transform="translate(13,91)"><rect x="-5.5" y="-5.5" width="11" height="10" fill="none" stroke="#bdbdbd" stroke-dasharray="2 1.5"/></g>
<path d="M22,97l2,0l-1,-2z" fill="#bbb" stroke="none" stroke-width="1" />
<g transform="translate(13,108)"><path d="M-6,-4C-2,-7 4,-6 6,-3C5,1 1,3 -2,2L-3,6M-6,-4C-6,-1 -4,1 -2,2" fill="none" stroke="#bdbdbd" stroke-width="1.3"/></g>
<path d="M22,114l2,0l-1,-2z" fill="#bbb" stroke="none" stroke-width="1" />
<rect x="4" y="117.5" width="21" height="16" fill="#2f2f2f" stroke="#262626" stroke-width="1"/>
<g transform="translate(13,125.5)"><path d="M-5,-5L5,5" stroke="#bdbdbd" stroke-width="1.8"/><path d="M-6,-4l2,-2M-7,-1h3M-2,-7v3M-4,1l2,-2" stroke="#bdbdbd"/></g>
<path d="M22,131.5l2,0l-1,-2z" fill="#bbb" stroke="none" stroke-width="1" />
<g transform="translate(13,144)"><path d="M-3,-7V3H7M-7,-3H3V7" fill="none" stroke="#bdbdbd" stroke-width="1.6"/></g>
<path d="M22,150l2,0l-1,-2z" fill="#bbb" stroke="none" stroke-width="1" />
<g transform="translate(13,161)"><path d="M-6,6L3,-3" stroke="#bdbdbd" stroke-width="2"/><path d="M2,-6l4,4l-2,2l-4,-4z" fill="#bdbdbd"/></g>
<path d="M22,167l2,0l-1,-2z" fill="#bbb" stroke="none" stroke-width="1" />
<g transform="translate(13,181)"><path d="M-6,3L3,-6L7,-2L-2,7Z" fill="#bdbdbd"/></g>
<path d="M22,187l2,0l-1,-2z" fill="#bbb" stroke="none" stroke-width="1" />
<g transform="translate(13,198.5)"><path d="M-7,7C-5,3 -3,2 -1,2L7,-7L-1,3" fill="none" stroke="#bdbdbd" stroke-width="1.6"/></g>
<path d="M22,204.5l2,0l-1,-2z" fill="#bbb" stroke="none" stroke-width="1" />
<g transform="translate(13,217)"><path d="M-2,-7h4v5h4v4h-12v-4h4z M-6,5h12" fill="#bdbdbd" stroke="#bdbdbd"/></g>
<path d="M22,223l2,0l-1,-2z" fill="#bbb" stroke="none" stroke-width="1" />
<g transform="translate(13,234)"><path d="M-7,6L6,-6M-5,1L2,-6" stroke="#bdbdbd" stroke-width="1.5"/></g>
<path d="M22,240l2,0l-1,-2z" fill="#bbb" stroke="none" stroke-width="1" />
<g transform="translate(13,252.5)"><path d="M-6,2L1,-6L7,-1L0,6Z" fill="#bdbdbd"/></g>
<path d="M22,258.5l2,0l-1,-2z" fill="#bbb" stroke="none" stroke-width="1" />
<g transform="translate(13,269.5)"><rect x="-6" y="-5" width="12" height="10" fill="#8a8a8a" stroke="#bdbdbd"/></g>
<path d="M22,275.5l2,0l-1,-2z" fill="#bbb" stroke="none" stroke-width="1" />
<g transform="translate(13,288)"><path d="M-6,-6h10v7l-6,4v4h-3v-5l-1,-1z" fill="#bdbdbd"/></g>
<path d="M22,294l2,0l-1,-2z" fill="#bbb" stroke="none" stroke-width="1" />
<g transform="translate(13,305)"><circle cx="-1" cy="-2" r="4" fill="#bdbdbd"/><path d="M2,1L6,6" stroke="#bdbdbd" stroke-width="2"/></g>
<path d="M22,311l2,0l-1,-2z" fill="#bbb" stroke="none" stroke-width="1" />
<g transform="translate(13,325)"><path d="M-6,6L-3,-2L2,-6L6,-2L2,3Z" fill="none" stroke="#bdbdbd" stroke-width="1.5"/></g>
<path d="M22,331l2,0l-1,-2z" fill="#bbb" stroke="none" stroke-width="1" />
<g transform="translate(13,343)"><path d="M-6,-6H6M0,-6V7" stroke="#bdbdbd" stroke-width="2"/></g>
<path d="M22,349l2,0l-1,-2z" fill="#bbb" stroke="none" stroke-width="1" />
<g transform="translate(13,361.5)"><path d="M-5,-7L-5,5L-2,2L1,7L6,-1L1,-1Z" fill="none" stroke="#bdbdbd" stroke-width="1.5"/></g>
<path d="M22,367.5l2,0l-1,-2z" fill="#bbb" stroke="none" stroke-width="1" />
<g transform="translate(13,378.5)"><rect x="-6" y="-5" width="12" height="10" fill="#8a8a8a" stroke="#bdbdbd" stroke-width="1.4"/></g>
<path d="M22,384.5l2,0l-1,-2z" fill="#bbb" stroke="none" stroke-width="1" />
<g transform="translate(13,399)"><path d="M-5,0V-5M-2,-1V-7M1,-1V-7M4,0V-5M-5,0C-5,5 -2,7 1,7C4,7 5,4 5,0" fill="none" stroke="#bdbdbd" stroke-width="1.7"/></g>
<path d="M22,405l2,0l-1,-2z" fill="#bbb" stroke="none" stroke-width="1" />
<g transform="translate(13,416)"><circle cx="-1" cy="-2" r="4" fill="none" stroke="#bdbdbd" stroke-width="1.6"/><path d="M2,1L6,6" stroke="#bdbdbd" stroke-width="2.2"/></g>
<path d="M22,422l2,0l-1,-2z" fill="#bbb" stroke="none" stroke-width="1" />
<rect x="7" y="429" width="5" height="5" fill="#111" stroke="#cfcfcf" stroke-width="0.8"/>
<path d="M17,428l4,4M17,432h2M21,428v2" fill="none" stroke="#cfcfcf" stroke-width="1" />
<rect x="11.5" y="444.5" width="12" height="12" fill="#f4f4f4" stroke="#333" stroke-width="1"/>
<rect x="5.5" y="437.5" width="12" height="12" fill="#0a0a0a" stroke="#bdbdbd" stroke-width="1"/>
<rect x="7.5" y="463.5" width="12" height="9" fill="none" stroke="#cfcfcf" stroke-width="1.2"/>
<circle cx="13.5" cy="468" r="2.5" fill="none" stroke="#cfcfcf" stroke-width="1.2"/>
<rect x="6.5" y="483.5" width="11" height="8" fill="#5a5a5a" stroke="#cfcfcf" stroke-width="1.2"/>
<rect x="9.5" y="480.5" width="11" height="8" fill="#6a6a6a" stroke="#cfcfcf" stroke-width="1.2"/>
<rect x="552" y="45" width="42" height="8" fill="#393939" />
<path d="M586,49l3,-2v4zM590,49l3,-2v4z" fill="#bbb" stroke="none" stroke-width="1" />
<rect x="553" y="53.5" width="40" height="46" fill="#525252" stroke="#3a3a3a" stroke-width="1"/>
<rect x="565" y="57" width="14" height="1.5" fill="#3a3a3a" />
<rect x="553" y="100.5" width="40" height="47" fill="#525252" stroke="#3a3a3a" stroke-width="1"/>
<rect x="565" y="104" width="14" height="1.5" fill="#3a3a3a" />
<path d="M561,73h7v-6h-7z" fill="#cfcfcf" stroke="none" stroke-width="1" />
<path d="M561,67l-2,-6M564,67v-7M567,67l2,-6" fill="none" stroke="#d8d8d8" stroke-width="1.8" />
<path d="M578,70h5" fill="none" stroke="#999" stroke-width="1.5" />
<path d="M559,89h10M560,94l8,-2v4z" fill="none" stroke="#d8d8d8" stroke-width="1.6" />
<path d="M578,93h5" fill="none" stroke="#999" stroke-width="1.5" />
<text x="558" y="124" font-size="12" fill="#d8d8d8" font-weight="normal" text-anchor="start" >A</text>
<path d="M569,113V126" fill="none" stroke="#d8d8d8" stroke-width="1.2" />
<path d="M578,122h5" fill="none" stroke="#999" stroke-width="1.5" />
<path d="M560,132h9v10h-3v-4h-6z" fill="#cfcfcf" stroke="none" stroke-width="1" />
<path d="M578,141h5" fill="none" stroke="#999" stroke-width="1.5" />
<rect x="597" y="45" width="170" height="8" fill="#393939" />
<path d="M758,47v4l3,-2zM762,47v4l3,-2z" fill="#bbb" stroke="none" stroke-width="1" />
<rect x="597" y="53" width="158" height="13" fill="#3d3d3d" />
<rect x="647" y="53" width="43" height="13" fill="#4c4c4c" />
<path transform="translate(601.0,55) scale(0.800)" d="M1,2H9 M5,1V9.5 M2,5.5H8 M1,9H9 M2.5,3.5L4,4.5 M7.5,3.5L6,4.5" fill="none" stroke="#a8a8a8" stroke-width="1.31"/><path transform="translate(609.5,55) scale(0.800)" d="M1.5,1V9.5 M1.5,1.5H4.5 M3.5,4.5H9.5 M6.5,1V9.5 M3.5,8.5H9.5 M1.5,5H4" fill="none" stroke="#a8a8a8" stroke-width="1.31"/>
<path transform="translate(628.0,55) scale(0.800)" d="M2,1V9.5 M0.5,3.5H3.5 M4,2H9.5 M4,5H9.5 M4,8.5H9.5 M6.5,2V8.5 M0.8,7.5L3,6" fill="none" stroke="#a8a8a8" stroke-width="1.31"/><path transform="translate(636.5,55) scale(0.800)" d="M5,0.8V3 M1,3H9 M2,5H8 M2,5V9 M8,5V9 M2,9H8 M5,5V9 M2,7H8" fill="none" stroke="#a8a8a8" stroke-width="1.31"/>
<path transform="translate(650.0,55) scale(0.900)" d="M1,1.5H9V9H1Z M1,5.2H9 M5,1.5V9 M3,3.3H7 M3,7H7" fill="none" stroke="#e8e8e8" stroke-width="1.17"/><path transform="translate(659.3,55) scale(0.900)" d="M5,0.8V3 M1,3H9 M2,5H8 M2,5V9 M8,5V9 M2,9H8 M5,5V9 M2,7H8" fill="none" stroke="#e8e8e8" stroke-width="1.17"/><path transform="translate(668.6,55) scale(0.900)" d="M1,2H9 M5,1V9.5 M2,5.5H8 M1,9H9 M2.5,3.5L4,4.5 M7.5,3.5L6,4.5" fill="none" stroke="#e8e8e8" stroke-width="1.17"/><path transform="translate(677.9,55) scale(0.900)" d="M5,0.8V3 M1,3H9 M2,5H8 M2,5V9 M8,5V9 M2,9H8 M5,5V9 M2,7H8" fill="none" stroke="#e8e8e8" stroke-width="1.17"/>
<path transform="translate(696.0,55) scale(0.800)" d="M1,1.5L3,3 M0.5,5H3 M1,9L3,6.5 M4,2H9.5 M6.5,1V9.5 M4,5.5H9.5 M4.5,9H9" fill="none" stroke="#a8a8a8" stroke-width="1.31"/><path transform="translate(704.5,55) scale(0.800)" d="M1,2H4 M2.5,2V9 M1,6H4 M5,1.5H9.5V9H5Z M5,5H9.5 M7.2,1.5V9" fill="none" stroke="#a8a8a8" stroke-width="1.31"/>
<path d="M749,59l3,3l3,-3z" fill="#ccc" stroke="none" stroke-width="1" />
<rect x="756" y="56" width="8" height="8" fill="#555" stroke="#888" stroke-width="0.8"/>
<rect x="755" y="53" width="12" height="13" fill="#3d3d3d" />
<rect x="759" y="56" width="6" height="7" fill="#666" stroke="#aaa" stroke-width="0.8"/>
<rect x="597" y="66" width="158" height="163" fill="#4a4a4a" />
<rect x="597" y="66" width="158" height="6" fill="#474747" />
<rect x="597" y="72" width="158" height="15.7" fill="#4a4a4a" />
<line x1="597" y1="72.5" x2="755" y2="72.5" stroke="#3c3c3c" stroke-width="1" />
<rect x="601.5" y="76" width="8" height="8" fill="none" stroke="#5e5e5e" stroke-width="1"/>
<rect x="618.5" y="75.5" width="9" height="10" fill="#8c8c8c" stroke="#c8c8c8" stroke-width="1"/>
<rect x="619" y="76" width="8" height="2" fill="#d0d0d0" />
<path transform="translate(636.0,76) scale(0.800)" d="M2,1V9.5 M0.5,3.5H3.5 M4,2H9.5 M4,5H9.5 M4,8.5H9.5 M6.5,2V8.5 M0.8,7.5L3,6" fill="none" stroke="#e0e0e0" stroke-width="1.30"/><path transform="translate(644.2,76) scale(0.800)" d="M1,1.5H9V9H1Z M1,5.2H9 M5,1.5V9 M3,3.3H7 M3,7H7" fill="none" stroke="#e0e0e0" stroke-width="1.30"/><path transform="translate(652.4,76) scale(0.800)" d="M5,0.8V3 M1,3H9 M2,5H8 M2,5V9 M8,5V9 M2,9H8 M5,5V9 M2,7H8" fill="none" stroke="#e0e0e0" stroke-width="1.30"/><path transform="translate(660.6,76) scale(0.800)" d="M5,0.8V3 M1,3H9 M2,5H8 M2,5V9 M8,5V9 M2,9H8 M5,5V9 M2,7H8" fill="none" stroke="#e0e0e0" stroke-width="1.30"/>
<rect x="597" y="88" width="158" height="15.7" fill="#4a4a4a" />
<line x1="597" y1="88.5" x2="755" y2="88.5" stroke="#3c3c3c" stroke-width="1" />
<rect x="601.5" y="92" width="8" height="8" fill="none" stroke="#5e5e5e" stroke-width="1"/>
<rect x="618.5" y="91.5" width="9" height="10" fill="#8c8c8c" stroke="#c8c8c8" stroke-width="1"/>
<rect x="619" y="92" width="8" height="2" fill="#d0d0d0" />
<path transform="translate(636.0,92) scale(0.800)" d="M1,2H4 M2.5,2V9 M1,6H4 M5,1.5H9.5V9H5Z M5,5H9.5 M7.2,1.5V9" fill="none" stroke="#e0e0e0" stroke-width="1.30"/><path transform="translate(644.2,92) scale(0.800)" d="M2,1V9.5 M0.5,3.5H3.5 M4,2H9.5 M4,5H9.5 M4,8.5H9.5 M6.5,2V8.5 M0.8,7.5L3,6" fill="none" stroke="#e0e0e0" stroke-width="1.30"/><path transform="translate(652.4,92) scale(0.800)" d="M1,2H9 M5,1V9.5 M2,5.5H8 M1,9H9 M2.5,3.5L4,4.5 M7.5,3.5L6,4.5" fill="none" stroke="#e0e0e0" stroke-width="1.30"/><path transform="translate(660.6,92) scale(0.800)" d="M1,1.5H9V9H1Z M1,5.2H9 M5,1.5V9 M3,3.3H7 M3,7H7" fill="none" stroke="#e0e0e0" stroke-width="1.30"/><path transform="translate(668.8,92) scale(0.800)" d="M5,0.8V3 M1,3H9 M2,5H8 M2,5V9 M8,5V9 M2,9H8 M5,5V9 M2,7H8" fill="none" stroke="#e0e0e0" stroke-width="1.30"/><path transform="translate(677.0,92) scale(0.800)" d="M1,2H4 M2.5,2V9 M1,6H4 M5,1.5H9.5V9H5Z M5,5H9.5 M7.2,1.5V9" fill="none" stroke="#e0e0e0" stroke-width="1.30"/><path transform="translate(685.2,92) scale(0.800)" d="M1,1.5H9V9H1Z M1,5.2H9 M5,1.5V9 M3,3.3H7 M3,7H7" fill="none" stroke="#e0e0e0" stroke-width="1.30"/>
<rect x="597" y="103.6" width="158" height="15.7" fill="#4a4a4a" />
<line x1="597" y1="104.1" x2="755" y2="104.1" stroke="#3c3c3c" stroke-width="1" />
<rect x="601.5" y="107.6" width="8" height="8" fill="none" stroke="#5e5e5e" stroke-width="1"/>
<rect x="618.5" y="107.1" width="9" height="10" fill="#8c8c8c" stroke="#c8c8c8" stroke-width="1"/>
<rect x="619" y="107.6" width="8" height="2" fill="#d0d0d0" />
<path transform="translate(636.0,107.6) scale(0.800)" d="M5,0.8V3 M1,3H9 M2,5H8 M2,5V9 M8,5V9 M2,9H8 M5,5V9 M2,7H8" fill="none" stroke="#e0e0e0" stroke-width="1.30"/><path transform="translate(644.2,107.6) scale(0.800)" d="M1,1.5H9V9H1Z M1,5.2H9 M5,1.5V9 M3,3.3H7 M3,7H7" fill="none" stroke="#e0e0e0" stroke-width="1.30"/><path transform="translate(652.4,107.6) scale(0.800)" d="M5,0.8V3 M1,3H9 M2,5H8 M2,5V9 M8,5V9 M2,9H8 M5,5V9 M2,7H8" fill="none" stroke="#e0e0e0" stroke-width="1.30"/><path transform="translate(660.6,107.6) scale(0.800)" d="M2,1V9.5 M0.5,3.5H3.5 M4,2H9.5 M4,5H9.5 M4,8.5H9.5 M6.5,2V8.5 M0.8,7.5L3,6" fill="none" stroke="#e0e0e0" stroke-width="1.30"/>
<rect x="597" y="119.3" width="158" height="15.7" fill="#4a4a4a" />
<line x1="597" y1="119.8" x2="755" y2="119.8" stroke="#3c3c3c" stroke-width="1" />
<rect x="601.5" y="123.3" width="8" height="8" fill="none" stroke="#5e5e5e" stroke-width="1"/>
<path d="M618,122.3l2,2M622,121.8v3M616,125.3h3M620,126.3L627,132.3" fill="none" stroke="#d8d8d8" stroke-width="1.5" />
<path transform="translate(636.0,123.3) scale(0.800)" d="M1.5,1V9.5 M1.5,1.5H4.5 M3.5,4.5H9.5 M6.5,1V9.5 M3.5,8.5H9.5 M1.5,5H4" fill="none" stroke="#e0e0e0" stroke-width="1.30"/><path transform="translate(644.2,123.3) scale(0.800)" d="M1,2H4 M2.5,2V9 M1,6H4 M5,1.5H9.5V9H5Z M5,5H9.5 M7.2,1.5V9" fill="none" stroke="#e0e0e0" stroke-width="1.30"/>
<rect x="597" y="135" width="158" height="15.7" fill="#4a4a4a" />
<line x1="597" y1="135.5" x2="755" y2="135.5" stroke="#3c3c3c" stroke-width="1" />
<rect x="601.5" y="139" width="8" height="8" fill="none" stroke="#5e5e5e" stroke-width="1"/>
<path d="M618,138l2,2M622,137.5v3M616,141h3M620,142L627,148" fill="none" stroke="#d8d8d8" stroke-width="1.5" />
<path transform="translate(636.0,139) scale(0.800)" d="M5,0.8V3 M1,3H9 M2,5H8 M2,5V9 M8,5V9 M2,9H8 M5,5V9 M2,7H8" fill="none" stroke="#e0e0e0" stroke-width="1.30"/><path transform="translate(644.2,139) scale(0.800)" d="M1.5,1V9.5 M1.5,1.5H4.5 M3.5,4.5H9.5 M6.5,1V9.5 M3.5,8.5H9.5 M1.5,5H4" fill="none" stroke="#e0e0e0" stroke-width="1.30"/>
<rect x="597" y="150.7" width="158" height="15.7" fill="#4a4a4a" />
<line x1="597" y1="151.2" x2="755" y2="151.2" stroke="#3c3c3c" stroke-width="1" />
<rect x="601.5" y="154.7" width="8" height="8" fill="none" stroke="#5e5e5e" stroke-width="1"/>
<path d="M618,153.7l2,2M622,153.2v3M616,156.7h3M620,157.7L627,163.7" fill="none" stroke="#d8d8d8" stroke-width="1.5" />
<path transform="translate(636.0,154.7) scale(0.800)" d="M1,1.5L3,3 M0.5,5H3 M1,9L3,6.5 M4,2H9.5 M6.5,1V9.5 M4,5.5H9.5 M4.5,9H9" fill="none" stroke="#e0e0e0" stroke-width="1.30"/><path transform="translate(644.2,154.7) scale(0.800)" d="M1,2H9 M5,1V9.5 M2,5.5H8 M1,9H9 M2.5,3.5L4,4.5 M7.5,3.5L6,4.5" fill="none" stroke="#e0e0e0" stroke-width="1.30"/>
<rect x="597" y="166.4" width="158" height="15.7" fill="#4a4a4a" />
<line x1="597" y1="166.9" x2="755" y2="166.9" stroke="#3c3c3c" stroke-width="1" />
<rect x="601.5" y="170.4" width="8" height="8" fill="none" stroke="#5e5e5e" stroke-width="1"/>
<path d="M618,169.4l2,2M622,168.9v3M616,172.4h3M620,173.4L627,179.4" fill="none" stroke="#d8d8d8" stroke-width="1.5" />
<path transform="translate(636.0,170.4) scale(0.800)" d="M1.5,1V9.5 M1.5,1.5H4.5 M3.5,4.5H9.5 M6.5,1V9.5 M3.5,8.5H9.5 M1.5,5H4" fill="none" stroke="#e0e0e0" stroke-width="1.30"/><path transform="translate(644.2,170.4) scale(0.800)" d="M5,0.8V3 M1,3H9 M2,5H8 M2,5V9 M8,5V9 M2,9H8 M5,5V9 M2,7H8" fill="none" stroke="#e0e0e0" stroke-width="1.30"/>
<rect x="597" y="182" width="158" height="15.7" fill="#4a4a4a" />
<line x1="597" y1="182.5" x2="755" y2="182.5" stroke="#3c3c3c" stroke-width="1" />
<rect x="601.5" y="186" width="8" height="8" fill="none" stroke="#5e5e5e" stroke-width="1"/>
<path d="M618,185l2,2M622,184.5v3M616,188h3M620,189L627,195" fill="none" stroke="#d8d8d8" stroke-width="1.5" />
<path transform="translate(636.0,186) scale(0.800)" d="M1.5,1V9.5 M1.5,1.5H4.5 M3.5,4.5H9.5 M6.5,1V9.5 M3.5,8.5H9.5 M1.5,5H4" fill="none" stroke="#e0e0e0" stroke-width="1.30"/><path transform="translate(644.2,186) scale(0.800)" d="M1,2H9 M5,1V9.5 M2,5.5H8 M1,9H9 M2.5,3.5L4,4.5 M7.5,3.5L6,4.5" fill="none" stroke="#e0e0e0" stroke-width="1.30"/>
<rect x="597" y="197.8" width="158" height="15.7" fill="#4a4a4a" />
<line x1="597" y1="198.3" x2="755" y2="198.3" stroke="#3c3c3c" stroke-width="1" />
<rect x="601.5" y="201.8" width="8" height="8" fill="none" stroke="#5e5e5e" stroke-width="1"/>
<path d="M618,200.8l2,2M622,200.3v3M616,203.8h3M620,204.8L627,210.8" fill="none" stroke="#d8d8d8" stroke-width="1.5" />
<path transform="translate(636.0,201.8) scale(0.800)" d="M1,2H9 M5,1V9.5 M2,5.5H8 M1,9H9 M2.5,3.5L4,4.5 M7.5,3.5L6,4.5" fill="none" stroke="#e0e0e0" stroke-width="1.30"/><path transform="translate(644.2,201.8) scale(0.800)" d="M2,1V9.5 M0.5,3.5H3.5 M4,2H9.5 M4,5H9.5 M4,8.5H9.5 M6.5,2V8.5 M0.8,7.5L3,6" fill="none" stroke="#e0e0e0" stroke-width="1.30"/>
<rect x="597" y="213.5" width="158" height="15.7" fill="#536173" />
<line x1="597" y1="214.0" x2="755" y2="214.0" stroke="#3c3c3c" stroke-width="1" />
<rect x="601.5" y="217.5" width="8" height="8" fill="none" stroke="#5e5e5e" stroke-width="1"/>
<rect x="618.5" y="217.0" width="9" height="10" fill="#8c8c8c" stroke="#c8c8c8" stroke-width="1"/>
<rect x="619" y="217.5" width="8" height="2" fill="#d0d0d0" />
<path transform="translate(636.0,217.5) scale(0.800)" d="M1,1.5L3,3 M0.5,5H3 M1,9L3,6.5 M4,2H9.5 M6.5,1V9.5 M4,5.5H9.5 M4.5,9H9" fill="none" stroke="#e0e0e0" stroke-width="1.30"/><path transform="translate(644.2,217.5) scale(0.800)" d="M2,1V9.5 M0.5,3.5H3.5 M4,2H9.5 M4,5H9.5 M4,8.5H9.5 M6.5,2V8.5 M0.8,7.5L3,6" fill="none" stroke="#e0e0e0" stroke-width="1.30"/><path transform="translate(652.4,217.5) scale(0.800)" d="M1,2H4 M2.5,2V9 M1,6H4 M5,1.5H9.5V9H5Z M5,5H9.5 M7.2,1.5V9" fill="none" stroke="#e0e0e0" stroke-width="1.30"/><path transform="translate(660.6,217.5) scale(0.800)" d="M1,1.5L3,3 M0.5,5H3 M1,9L3,6.5 M4,2H9.5 M6.5,1V9.5 M4,5.5H9.5 M4.5,9H9" fill="none" stroke="#e0e0e0" stroke-width="1.30"/>
<rect x="755" y="66" width="12" height="163" fill="#3a3a3a" />
<rect x="757" y="153" width="8" height="64" fill="#6c6c6c" />
<path d="M758,75l3,-3l3,3z" fill="#bbb" stroke="none" stroke-width="1" />
<path d="M758,221l3,3l3,-3z" fill="#bbb" stroke="none" stroke-width="1" />
<rect x="597" y="229" width="170" height="13" fill="#4a4a4a" />
<path d="M697,233l3,3h4M701,232v6M698,238h4" fill="none" stroke="#ddd" stroke-width="1.4" />
<rect x="716" y="233" width="10" height="7" fill="#d8d8d8" />
<circle cx="721" cy="236.5" r="2" fill="#4a4a4a"/>
<rect x="738" y="232" width="7" height="8" fill="#9a9a9a" />
<rect x="597" y="241" width="170" height="2" fill="#2e2e2e" />
<rect x="597" y="243" width="170" height="11" fill="#3d3d3d" />
<rect x="597" y="243" width="24" height="11" fill="#4c4c4c" />
<path transform="translate(600.0,244.5) scale(0.900)" d="M2,1V9.5 M0.5,3.5H3.5 M4,2H9.5 M4,5H9.5 M4,8.5H9.5 M6.5,2V8.5 M0.8,7.5L3,6" fill="none" stroke="#e8e8e8" stroke-width="1.17"/><path transform="translate(609.4,244.5) scale(0.900)" d="M1,1.5H9V9H1Z M1,5.2H9 M5,1.5V9 M3,3.3H7 M3,7H7" fill="none" stroke="#e8e8e8" stroke-width="1.17"/>
<path transform="translate(627.0,244.5) scale(0.850)" d="M5,0.8V3 M1,3H9 M2,5H8 M2,5V9 M8,5V9 M2,9H8 M5,5V9 M2,7H8" fill="none" stroke="#a8a8a8" stroke-width="1.24"/><path transform="translate(635.9,244.5) scale(0.850)" d="M1,2H9 M5,1V9.5 M2,5.5H8 M1,9H9 M2.5,3.5L4,4.5 M7.5,3.5L6,4.5" fill="none" stroke="#a8a8a8" stroke-width="1.24"/>
<path d="M749,248l3,3l3,-3z" fill="#ccc" stroke="none" stroke-width="1" />
<rect x="757" y="245" width="7" height="7" fill="#666" stroke="#aaa" stroke-width="0.8"/>
<rect x="597" y="254" width="170" height="76" fill="#4c4c4c" />
<path transform="translate(603.0,259) scale(0.850)" d="M5,0.8V3 M1,3H9 M2,5H8 M2,5V9 M8,5V9 M2,9H8 M5,5V9 M2,7H8" fill="none" stroke="#e4e4e4" stroke-width="1.24"/><path transform="translate(611.7,259) scale(0.850)" d="M1.5,1V9.5 M1.5,1.5H4.5 M3.5,4.5H9.5 M6.5,1V9.5 M3.5,8.5H9.5 M1.5,5H4" fill="none" stroke="#e4e4e4" stroke-width="1.24"/><path transform="translate(620.4,259) scale(0.850)" d="M1,2H9 M5,1V9.5 M2,5.5H8 M1,9H9 M2.5,3.5L4,4.5 M7.5,3.5L6,4.5" fill="none" stroke="#e4e4e4" stroke-width="1.24"/><path transform="translate(629.1,259) scale(0.850)" d="M1,2H4 M2.5,2V9 M1,6H4 M5,1.5H9.5V9H5Z M5,5H9.5 M7.2,1.5V9" fill="none" stroke="#e4e4e4" stroke-width="1.24"/>
<circle cx="634" cy="281" r="3" fill="#c4c4c4"/><path d="M628,281h3M637,281h3M634,275v3M634,284v3M630,277l2,2M636,283l2,2M638,277l-2,2M632,283l-2,2" stroke="#c4c4c4"/>
<path d="M644,285L646,280L648,282L650,277L652,281L654,279L656,282L658,278V285Z" fill="#c4c4c4" stroke="none" stroke-width="1" />
<rect x="661" y="276" width="12" height="10" fill="#7a7a7a" stroke="#ccc" stroke-width="1"/>
<path d="M661,286L673,276" fill="none" stroke="#cfcfcf" stroke-width="1.3" />
<rect x="678" y="276" width="12" height="10" fill="#888" stroke="#c4c4c4" stroke-width="1"/>
<path d="M678,286L690,276L690,286Z" fill="#333" stroke="none" stroke-width="1" />
<path d="M694,276H706L700,287Z" fill="none" stroke="#c4c4c4" stroke-width="1.5" />
<rect x="619" y="294.5" width="12" height="10" fill="#9a9a9a" stroke="#c4c4c4" stroke-width="1"/>
<rect x="619" y="299.5" width="6" height="5" fill="#444" />
<path d="M636,303.5h12M642,293.5v10M636,297.5h12M636,297.5l-1,5h3zM648,297.5l-1,5h3z" fill="none" stroke="#c4c4c4" stroke-width="1" />
<rect x="654.5" y="293.5" width="10" height="12" fill="#c4c4c4" />
<rect x="659.5" y="293.5" width="5" height="12" fill="#666" />
<circle cx="674" cy="298.5" r="4" fill="#bbb" stroke="#cfcfcf"/><circle cx="678" cy="301.5" r="4" fill="#888" stroke="#cfcfcf"/>
<circle cx="692" cy="296.5" r="3" fill="#c4c4c4"/><circle cx="689" cy="301.5" r="3" fill="#aaa"/><circle cx="695" cy="301.5" r="3" fill="#cfcfcf"/>
<rect x="703" y="294.5" width="12" height="10" fill="#777" stroke="#c4c4c4" stroke-width="1"/>
<path d="M703,299.5h12M707,294.5v10M711,294.5v10" fill="none" stroke="#c4c4c4" stroke-width="0.8" />
<rect x="628" y="313" width="12" height="12" fill="#8a8a8a" stroke="#ccc" stroke-width="1"/>
<path d="M630,323L638,315" fill="none" stroke="#333" stroke-width="2" />
<rect x="645" y="313" width="12" height="12" fill="#999" stroke="#ccc" stroke-width="1"/>
<path d="M645,321L653,313M649,325L657,317" fill="none" stroke="#444" stroke-width="1.5" />
<rect x="661" y="313" width="12" height="12" fill="#aaa" stroke="#ccc" stroke-width="1"/>
<path d="M661,325L673,313" fill="none" stroke="#333" stroke-width="3" />
<rect x="678" y="313" width="12" height="12" fill="#777" stroke="#ccc" stroke-width="1"/>
<path d="M678,313L690,325M690,313L678,325" fill="none" stroke="#c4c4c4" stroke-width="2" />
<defs><linearGradient id="gr700"><stop offset="0" stop-color="#333"/><stop offset="1" stop-color="#cfcfcf"/></linearGradient></defs>
<rect x="694" y="313" width="12" height="12" fill="url(#gr700)" stroke="#ccc" stroke-width="1"/>
<rect x="597" y="330" width="170" height="3" fill="#2e2e2e" />
<rect x="597" y="333" width="170" height="10" fill="#3d3d3d" />
<rect x="597" y="333" width="25" height="10" fill="#4c4c4c" />
<path transform="translate(600.0,334) scale(0.850)" d="M1.5,1V9.5 M1.5,1.5H4.5 M3.5,4.5H9.5 M6.5,1V9.5 M3.5,8.5H9.5 M1.5,5H4" fill="none" stroke="#e8e8e8" stroke-width="1.24"/><path transform="translate(608.9,334) scale(0.850)" d="M1,2H9 M5,1V9.5 M2,5.5H8 M1,9H9 M2.5,3.5L4,4.5 M7.5,3.5L6,4.5" fill="none" stroke="#e8e8e8" stroke-width="1.24"/>
<path transform="translate(628.0,334) scale(0.850)" d="M5,0.8V3 M1,3H9 M2,5H8 M2,5V9 M8,5V9 M2,9H8 M5,5V9 M2,7H8" fill="none" stroke="#a8a8a8" stroke-width="1.24"/><path transform="translate(636.9,334) scale(0.850)" d="M1,1.5H9V9H1Z M1,5.2H9 M5,1.5V9 M3,3.3H7 M3,7H7" fill="none" stroke="#a8a8a8" stroke-width="1.24"/>
<path transform="translate(655.0,334) scale(0.850)" d="M1,1.5H9V9H1Z M1,5.2H9 M5,1.5V9 M3,3.3H7 M3,7H7" fill="none" stroke="#a8a8a8" stroke-width="1.24"/><path transform="translate(663.9,334) scale(0.850)" d="M5,0.8V3 M1,3H9 M2,5H8 M2,5V9 M8,5V9 M2,9H8 M5,5V9 M2,7H8" fill="none" stroke="#a8a8a8" stroke-width="1.24"/>
<path d="M749,337l3,3l3,-3z" fill="#ccc" stroke="none" stroke-width="1" />
<rect x="757" y="335" width="7" height="7" fill="#666" stroke="#aaa" stroke-width="0.8"/>
<rect x="597" y="343" width="170" height="166" fill="#4a4a4a" />
<rect x="597.5" y="348.5" width="50" height="13" fill="#555" stroke="#3a3a3a" stroke-width="1"/>
<text x="601" y="358.5" font-size="9" fill="#ccc" font-weight="normal" text-anchor="start" >ρ</text>
<path transform="translate(609.0,350.5) scale(0.800)" d="M1.5,1V9.5 M1.5,1.5H4.5 M3.5,4.5H9.5 M6.5,1V9.5 M3.5,8.5H9.5 M1.5,5H4" fill="none" stroke="#d8d8d8" stroke-width="1.31"/><path transform="translate(617.3,350.5) scale(0.800)" d="M2,1V9.5 M0.5,3.5H3.5 M4,2H9.5 M4,5H9.5 M4,8.5H9.5 M6.5,2V8.5 M0.8,7.5L3,6" fill="none" stroke="#d8d8d8" stroke-width="1.31"/>
<path d="M641,352l2,-2l2,2M641,357l2,2l2,-2" fill="none" stroke="#ccc" stroke-width="1" />
<rect x="661.5" y="351" width="9" height="8" fill="none" stroke="#8a8a8a" stroke-width="1"/>
<rect x="678.5" y="351" width="9" height="8" fill="none" stroke="#8a8a8a" stroke-width="1"/>
<rect x="692.5" y="351" width="9" height="8" fill="none" stroke="#8a8a8a" stroke-width="1"/>
<rect x="707.5" y="351" width="9" height="8" fill="none" stroke="#8a8a8a" stroke-width="1"/>
<rect x="723.5" y="351" width="9" height="8" fill="none" stroke="#8a8a8a" stroke-width="1"/>
<rect x="748" y="349" width="9" height="12" fill="#333" stroke="#888" stroke-width="1"/>
<rect x="750" y="351" width="5" height="4" fill="#aaa" />
<rect x="597.5" y="367.5" width="75" height="13" fill="#555" stroke="#3a3a3a" stroke-width="1"/>
<path transform="translate(601.0,369.5) scale(0.850)" d="M1,1.5L3,3 M0.5,5H3 M1,9L3,6.5 M4,2H9.5 M6.5,1V9.5 M4,5.5H9.5 M4.5,9H9" fill="none" stroke="#d8d8d8" stroke-width="1.24"/><path transform="translate(609.8,369.5) scale(0.850)" d="M1,2H9 M5,1V9.5 M2,5.5H8 M1,9H9 M2.5,3.5L4,4.5 M7.5,3.5L6,4.5" fill="none" stroke="#d8d8d8" stroke-width="1.24"/>
<path d="M666,371l2,-2l2,2M666,376l2,2l2,-2" fill="none" stroke="#ccc" stroke-width="1" />
<path transform="translate(678.0,369.5) scale(0.800)" d="M2,1V9.5 M0.5,3.5H3.5 M4,2H9.5 M4,5H9.5 M4,8.5H9.5 M6.5,2V8.5 M0.8,7.5L3,6" fill="none" stroke="#d0d0d0" stroke-width="1.31"/><path transform="translate(686.2,369.5) scale(0.800)" d="M1.5,1V9.5 M1.5,1.5H4.5 M3.5,4.5H9.5 M6.5,1V9.5 M3.5,8.5H9.5 M1.5,5H4" fill="none" stroke="#d0d0d0" stroke-width="1.31"/><path transform="translate(694.4,369.5) scale(0.800)" d="M1.5,1V9.5 M1.5,1.5H4.5 M3.5,4.5H9.5 M6.5,1V9.5 M3.5,8.5H9.5 M1.5,5H4" fill="none" stroke="#d0d0d0" stroke-width="1.31"/><path transform="translate(702.6,369.5) scale(0.800)" d="M1,1.5H9V9H1Z M1,5.2H9 M5,1.5V9 M3,3.3H7 M3,7H7" fill="none" stroke="#d0d0d0" stroke-width="1.31"/><path transform="translate(710.8,369.5) scale(0.800)" d="M1,2H4 M2.5,2V9 M1,6H4 M5,1.5H9.5V9H5Z M5,5H9.5 M7.2,1.5V9" fill="none" stroke="#d0d0d0" stroke-width="1.31"/>
<text x="718" y="378" font-size="8" fill="#ccc" font-weight="normal" text-anchor="start" >:</text>
<rect x="720" y="367" width="27" height="13" fill="#3c3c3c" />
<text x="722" y="377" font-size="7.5" fill="#6a6a6a" font-weight="normal" text-anchor="start" >100%</text>
<rect x="748" y="367" width="9" height="13" fill="#606060" />
<path d="M750,373h5" fill="none" stroke="#ddd" stroke-width="1" />
<path transform="translate(597.0,387.5) scale(0.800)" d="M1,1.5H9V9H1Z M1,5.2H9 M5,1.5V9 M3,3.3H7 M3,7H7" fill="none" stroke="#c8c8c8" stroke-width="1.31"/><path transform="translate(605.3,387.5) scale(0.800)" d="M1,1.5L3,3 M0.5,5H3 M1,9L3,6.5 M4,2H9.5 M6.5,1V9.5 M4,5.5H9.5 M4.5,9H9" fill="none" stroke="#c8c8c8" stroke-width="1.31"/>
<text x="615" y="396" font-size="8" fill="#ccc" font-weight="normal" text-anchor="start" >:</text>
<rect x="625" y="388" width="8" height="8" fill="none" stroke="#9a9a9a" stroke-width="1" stroke-dasharray="1.5 1"/>
<path d="M638,397L647,388" fill="none" stroke="#9a9a9a" stroke-width="1.5" />
<path d="M658,388v9M653.5,392.5h9" fill="none" stroke="#9a9a9a" stroke-width="1.2" />
<rect x="670.5" y="391.5" width="7" height="6" fill="none" stroke="#9a9a9a" stroke-width="1"/>
<path d="M672,391.5v-2a2,2 0 0 1 4,0v2" fill="none" stroke="#9a9a9a" stroke-width="1" />
<path transform="translate(698.0,387.5) scale(0.800)" d="M5,0.8V3 M1,3H9 M2,5H8 M2,5V9 M8,5V9 M2,9H8 M5,5V9 M2,7H8" fill="none" stroke="#c8c8c8" stroke-width="1.31"/><path transform="translate(706.3,387.5) scale(0.800)" d="M5,0.8V3 M1,3H9 M2,5H8 M2,5V9 M8,5V9 M2,9H8 M5,5V9 M2,7H8" fill="none" stroke="#c8c8c8" stroke-width="1.31"/>
<text x="716" y="396" font-size="8" fill="#ccc" font-weight="normal" text-anchor="start" >:</text>
<rect x="720" y="386" width="27" height="13" fill="#3c3c3c" />
<text x="722" y="396" font-size="7.5" fill="#6a6a6a" font-weight="normal" text-anchor="start" >100%</text>
<rect x="748" y="386" width="9" height="13" fill="#606060" />
<path d="M750,392h5" fill="none" stroke="#ddd" stroke-width="1" />
<rect x="597" y="403" width="158" height="28" fill="#4a4a4a" />
<line x1="597" y1="403.5" x2="755" y2="403.5" stroke="#3a3a3a" stroke-width="1" />
<line x1="597" y1="430.5" x2="755" y2="430.5" stroke="#3a3a3a" stroke-width="1" />
<rect x="616" y="404" width="139" height="26" fill="#566378" />
<line x1="615.5" y1="404" x2="615.5" y2="430" stroke="#3a3a3a" stroke-width="1" />
<path d="M600,416.5C603,412 608,412 611,416.5C608,421 603,421 600,416.5Z" fill="none" stroke="#ddd" stroke-width="1.2" />
<circle cx="605.5" cy="416.5" r="1.8" fill="#ddd"/>
<rect x="618.5" y="405.5" width="20" height="23" fill="#ffffff" stroke="#222" stroke-width="1"/>
<ellipse cx="628" cy="414" rx="6" ry="5" fill="#f0a5a8"/><path d="M625,418h6v7h-6z" fill="#f7dcd8"/><circle cx="628" cy="417" r="3" fill="#e87d8c"/>
<path transform="translate(645.0,412) scale(0.900)" d="M1,1.5L3,3 M0.5,5H3 M1,9L3,6.5 M4,2H9.5 M6.5,1V9.5 M4,5.5H9.5 M4.5,9H9" fill="none" stroke="#f0f0f0" stroke-width="1.10"/><path transform="translate(654.3,412) scale(0.900)" d="M1,1.5L3,3 M0.5,5H3 M1,9L3,6.5 M4,2H9.5 M6.5,1V9.5 M4,5.5H9.5 M4.5,9H9" fill="none" stroke="#f0f0f0" stroke-width="1.10"/>
<rect x="736.5" y="415.5" width="7" height="6" fill="none" stroke="#ddd" stroke-width="1"/>
<path d="M738,415.5v-2a2,2 0 0 1 4,0v2" fill="none" stroke="#ddd" stroke-width="1" />
<rect x="755" y="403" width="12" height="106" fill="#484848" />
<line x1="755.5" y1="403" x2="755.5" y2="509" stroke="#3a3a3a" stroke-width="1" />
<rect x="597" y="509" width="170" height="14" fill="#474747" />
<line x1="597" y1="509.5" x2="767" y2="509.5" stroke="#3a3a3a" stroke-width="1" />
<path d="M625,516h4M631,516h4" fill="none" stroke="#bbb" stroke-width="2" />
<text x="646" y="520" font-size="9" fill="#bbb" font-weight="normal" text-anchor="start" font-style="italic">fx</text>
<rect x="664" y="512" width="10" height="8" fill="#ddd" />
<circle cx="669" cy="516" r="2.5" fill="#4a4a4a"/>
<circle cx="684" cy="516" r="4" fill="none" stroke="#ddd" stroke-width="1.5"/><path d="M684,512a4,4 0 0 1 0,8z" fill="#ddd"/>
<path d="M696,513h4l1,1h5v6h-10z" fill="#ddd" stroke="none" stroke-width="1" />
<rect x="718" y="512" width="8" height="9" fill="#ddd" />
<rect x="720" y="514" width="4" height="5" fill="#555" />
<rect x="738" y="513" width="7" height="8" fill="#777" /></g>
<g filter="url(#sb)"><rect x="31.10" y="1.00" width="12.3" height="11.90" fill="#4d4d4d"/>
<rect x="43.15" y="1.00" width="12.3" height="11.90" fill="#555555"/>
<rect x="55.20" y="1.00" width="12.3" height="11.90" fill="#4f4f4f"/>
<rect x="67.25" y="1.00" width="12.3" height="11.90" fill="#555555"/>
<rect x="79.30" y="1.00" width="12.3" height="11.90" fill="#585858"/>
<rect x="91.35" y="1.00" width="12.3" height="11.90" fill="#5a5a5a"/>
<rect x="103.40" y="1.00" width="12.3" height="11.90" fill="#5a5a5a"/>
<rect x="115.45" y="1.00" width="12.3" height="11.90" fill="#626262"/>
<rect x="127.50" y="1.00" width="12.3" height="11.90" fill="#555555"/>
<rect x="139.55" y="1.00" width="12.3" height="11.90" fill="#545454"/>
<rect x="31.10" y="12.60" width="12.3" height="12.40" fill="#4e4e4e"/>
<rect x="43.15" y="12.60" width="12.3" height="12.40" fill="#8a8a8a"/>
<rect x="55.20" y="12.60" width="12.3" height="12.40" fill="#8a8a8a"/>
<rect x="67.25" y="12.60" width="12.3" height="12.40" fill="#969696"/>
<rect x="79.30" y="12.60" width="12.3" height="12.40" fill="#8f8f8f"/>
<rect x="91.35" y="12.60" width="12.3" height="12.40" fill="#9a9a9a"/>
<rect x="103.40" y="12.60" width="12.3" height="12.40" fill="#6e6e6e"/>
<rect x="115.45" y="12.60" width="12.3" height="12.40" fill="#727272"/>
<rect x="127.50" y="12.60" width="12.3" height="12.40" fill="#5a5a5a"/>
<rect x="139.55" y="12.60" width="12.3" height="12.40" fill="#545454"/>
<rect x="7.00" y="24.70" width="12.3" height="12.40" fill="#555555"/>
<rect x="19.05" y="24.70" width="12.3" height="12.40" fill="#7e7e7e"/>
<rect x="31.10" y="24.70" width="12.3" height="12.40" fill="#999999"/>
<rect x="43.15" y="24.70" width="12.3" height="12.40" fill="#7b7b7b"/>
<rect x="55.20" y="24.70" width="12.3" height="12.40" fill="#767676"/>
<rect x="67.25" y="24.70" width="12.3" height="12.40" fill="#7a7a7a"/>
<rect x="79.30" y="24.70" width="12.3" height="12.40" fill="#545454"/>
<rect x="91.35" y="24.70" width="12.3" height="12.40" fill="#626262"/>
<rect x="103.40" y="24.70" width="12.3" height="12.40" fill="#707070"/>
<rect x="115.45" y="24.70" width="12.3" height="12.40" fill="#787878"/>
<rect x="127.50" y="24.70" width="12.3" height="12.40" fill="#a0a0a0"/>
<rect x="139.55" y="24.70" width="12.3" height="12.40" fill="#7a7a7a"/>
<rect x="151.60" y="24.70" width="12.3" height="12.40" fill="#5e5e5e"/>
<rect x="163.65" y="24.70" width="12.3" height="12.40" fill="#5a5a5a"/>
<rect x="7.00" y="36.80" width="12.3" height="12.40" fill="#6e6e6e"/>
<rect x="19.05" y="36.80" width="12.3" height="12.40" fill="#6e6e6e"/>
<rect x="31.10" y="36.80" width="12.3" height="12.40" fill="#535353"/>
<rect x="43.15" y="36.80" width="12.3" height="12.40" fill="#a0a0a0"/>
<rect x="55.20" y="36.80" width="12.3" height="12.40" fill="#5a5a5a"/>
<rect x="67.25" y="36.80" width="12.3" height="12.40" fill="#9e9e9e"/>
<rect x="79.30" y="36.80" width="12.3" height="12.40" fill="#525252"/>
<rect x="91.35" y="36.80" width="12.3" height="12.40" fill="#6e6e6e"/>
<rect x="103.40" y="36.80" width="12.3" height="12.40" fill="#585858"/>
<rect x="115.45" y="36.80" width="12.3" height="12.40" fill="#999999"/>
<rect x="127.50" y="36.80" width="12.3" height="12.40" fill="#555555"/>
<rect x="139.55" y="36.80" width="12.3" height="12.40" fill="#7a7a7a"/>
<rect x="151.60" y="36.80" width="12.3" height="12.40" fill="#a0a0a0"/>
<rect x="163.65" y="36.80" width="12.3" height="12.40" fill="#505050"/>
<rect x="175.70" y="36.80" width="12.3" height="12.40" fill="#4e4e4e"/>
<rect x="7.00" y="48.90" width="12.3" height="12.40" fill="#4e4e4e"/>
<rect x="19.05" y="48.90" width="12.3" height="12.40" fill="#474747"/>
<rect x="31.10" y="48.90" width="12.3" height="12.40" fill="#555555"/>
<rect x="43.15" y="48.90" width="12.3" height="12.40" fill="#7c7c7c"/>
<rect x="55.20" y="48.90" width="12.3" height="12.40" fill="#787878"/>
<rect x="67.25" y="48.90" width="12.3" height="12.40" fill="#7e7e7e"/>
<rect x="79.30" y="48.90" width="12.3" height="12.40" fill="#6c6c6c"/>
<rect x="91.35" y="48.90" width="12.3" height="12.40" fill="#7a7a7a"/>
<rect x="103.40" y="48.90" width="12.3" height="12.40" fill="#6a6a6a"/>
<rect x="115.45" y="48.90" width="12.3" height="12.40" fill="#8a8a8a"/>
<rect x="127.50" y="48.90" width="12.3" height="12.40" fill="#606060"/>
<rect x="139.55" y="48.90" width="12.3" height="12.40" fill="#4a4a4a"/>
<path d="M42,32.5L48,31.5L54,31" stroke="#e8e8e8" stroke-width="1.3" fill="none"/><path d="M73,9L79,7.5" stroke="#dcdcdc" stroke-width="1.2" fill="none"/></g>
</svg>
</body></html>
